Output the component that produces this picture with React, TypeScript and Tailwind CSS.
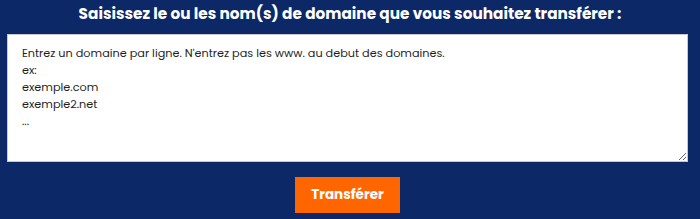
export default function App() {
  return (
    <div className="w-[700px] h-[219px] bg-[#0c2866] font-['Poppins','Open_Sans',sans-serif] flex flex-col items-center">
      <h2 className="pt-[3px] text-[15.3px] leading-[22px] font-bold text-white text-center">
        Saisissez le ou les nom(s) de domaine que vous souhaitez transférer :
      </h2>
      <div className="self-start ml-[7px] mt-[9px] w-[681px] flex flex-col items-center">
        <textarea
          className="w-full h-[128px] bg-white border border-[#c7c9d1] px-[14px] pt-[10px] text-[11.25px] leading-[17px] text-[#1f1f1f] outline-none"
          defaultValue={"Entrez un domaine par ligne. N'entrez pas les www. au debut des domaines.\nex:\nexemple.com\nexemple2.net\n..."}
        />
        <button className="mt-[15px] w-[105px] h-[36px] bg-[#ff6600] text-white font-bold text-[13.5px]">
          Transférer
        </button>
      </div>
    </div>
  );
}
